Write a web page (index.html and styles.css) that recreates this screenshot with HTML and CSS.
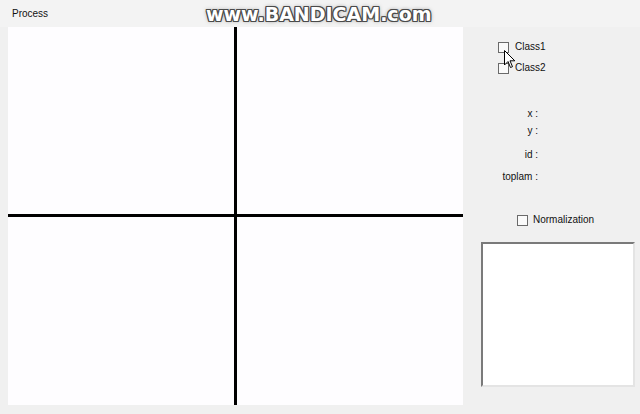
FILE: index.html
```html
<!DOCTYPE html>
<html>
<head>
<meta charset="utf-8">
<link rel="stylesheet" href="styles.css">
</head>
<body>
<div class="window">
  <div class="menubar"><span class="menu-item">Process</span></div>
  <div class="main">
    <div class="canvas">
      <svg class="axes" width="455" height="378" viewBox="0 0 455 378">
        <rect x="226" y="0" width="3" height="378" fill="#000"/>
        <rect x="0" y="187" width="455" height="3" fill="#000"/>
      </svg>
    </div>
    <div class="panel">
      <label class="check row-class1"><span class="box"></span>Class1</label>
      <label class="check row-class2"><span class="box"></span>Class2</label>
      <div class="field row-x">x :</div>
      <div class="field row-y">y :</div>
      <div class="field row-id">id :</div>
      <div class="field row-toplam">toplam :</div>
      <label class="check row-norm"><span class="box"></span>Normalization</label>
      <div class="listbox"></div>
    </div>
  </div>
  <div class="watermark">www.BANDICAM.com</div>
  <svg class="cursor" width="12" height="19" viewBox="0 0 12 19">
    <path d="M0.5 0.5 L0.5 15 L4 11.5 L6.5 17.5 L8.5 16.7 L6 10.8 L10.8 10.8 Z" fill="#fff" stroke="#000" stroke-width="1" stroke-linejoin="round"/>
  </svg>
</div>
</body>
</html>
```
FILE: styles.css
```css
html, body {
  margin: 0;
  padding: 0;
  background: #f0f0f0;
}
.window {
  position: relative;
  width: 640px;
  height: 414px;
  overflow: hidden;
  font-family: "Liberation Sans", Arial, sans-serif;
  font-size: 10px;
  color: #111;
}
.menubar {
  height: 27px;
  background: #f3f3f3;
  display: flex;
  align-items: center;
}
.menu-item {
  padding-left: 12px;
  font-size: 10px;
  margin-top: 0;
}
.main {
  display: flex;
  align-items: flex-start;
}
.canvas {
  margin-left: 8px;
  width: 455px;
  height: 378px;
  background: #fefdff;
}
.axes {
  display: block;
}
.panel {
  flex: 1;
  display: flex;
  flex-direction: column;
  align-items: flex-start;
}
.check {
  display: flex;
  align-items: center;
  height: 14px;
  line-height: 14px;
}
.box {
  width: 9px;
  height: 9px;
  border: 1px solid #6a6a6a;
  background: #fafafa;
  margin-right: 6px;
}
.row-class1 { margin-top: 13px; margin-left: 35px; }
.row-class2 { margin-top: 7px; margin-left: 35px; }
.field {
  width: 75px;
  text-align: right;
  height: 14px;
  line-height: 14px;
}
.row-x { margin-top: 32px; }
.row-y { margin-top: 3px; }
.row-id { margin-top: 10px; }
.row-toplam { margin-top: 8px; }
.row-norm { margin-top: 29px; margin-left: 54px; }
.row-norm .box { margin-right: 5px; }
.listbox {
  margin-top: 15px;
  margin-left: 18px;
  width: 150px;
  height: 141px;
  background: #fff;
  border-style: solid;
  border-width: 2px;
  border-color: #7a7a7a #e4e4e4 #e4e4e4 #7a7a7a;
}
.watermark {
  position: absolute;
  left: 206px;
  top: 3px;
  font-family: "DejaVu Sans", sans-serif;
  font-weight: bold;
  font-size: 19px;
  letter-spacing: 0;
  color: #fff;
  text-shadow:
    1px 0 0 #4a4a4a, -1px 0 0 #4a4a4a, 0 1px 0 #4a4a4a, 0 -1px 0 #4a4a4a,
    1px 1px 0 #4a4a4a, -1px -1px 0 #4a4a4a, 1px -1px 0 #4a4a4a, -1px 1px 0 #4a4a4a,
    0 0 4px rgba(0,0,0,0.5);
}
.cursor {
  position: absolute;
  left: 504px;
  top: 50px;
}
```
